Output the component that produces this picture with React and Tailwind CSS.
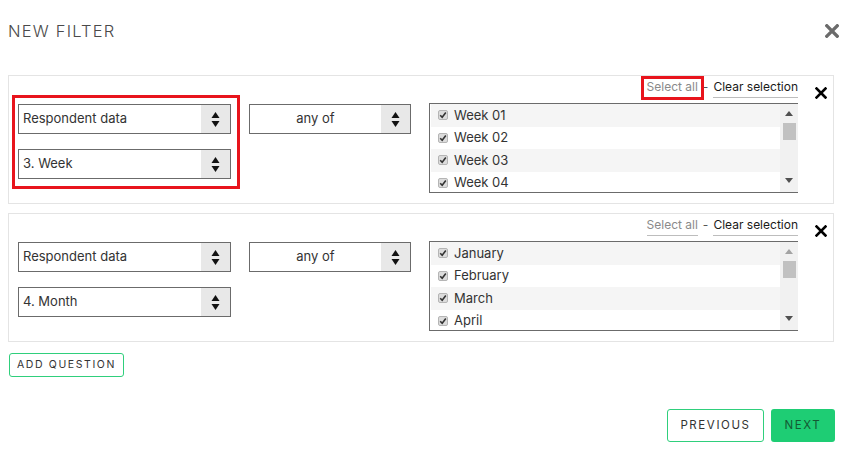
import React from 'react';

const font = { fontFamily: 'Inter, "Liberation Sans", sans-serif' };

const Arrows = () => (
    <svg width="9" height="17" viewBox="0 0 9 17" className="block">
        <path d="M4.5 1 L8.5 7 L0.5 7 Z" fill="#111" />
        <path d="M0.5 10 L8.5 10 L4.5 16 Z" fill="#111" />
    </svg>
);

const FakeSelect = ({ value, width, center }) => (
    <div className={`flex h-[30px] border border-[#6b6b6b] bg-white ${width}`}>
        <div className={`flex-1 flex items-center text-[13px] text-[#333] ${center ? 'justify-center' : 'pl-[4px]'}`}>{value}</div>
        <div className="w-[29px] bg-[#e8e8e8] flex items-center justify-center">
            <Arrows />
        </div>
    </div>
);

const CheckBox = () => (
    <span className="w-[10px] h-[10px] bg-[#dcdcdc] border border-[#b5b5b5] rounded-[2px] flex items-center justify-center">
        <svg width="8" height="8" viewBox="0 0 8 8">
            <path d="M1.2 4.2 L3.2 6.2 L6.8 1.6" stroke="#333" strokeWidth="1.6" fill="none" />
        </svg>
    </span>
);

const OptionList = ({ items, upDisabled }) => (
    <div className="flex w-[369px] h-[90px] border-l border-t border-b border-[#6b6b6b] bg-white overflow-hidden">
        <div className="flex-1 pl-[1px] overflow-hidden">
            {items.map((item, i) => (
                <div key={item} className={`h-[22.5px] shrink-0 flex items-center gap-[6px] pl-[7px] text-[13px] text-[#333] ${i % 2 === 0 ? 'bg-[#f5f5f5]' : 'bg-white'}`}>
                    <CheckBox />
                    <span>{item}</span>
                </div>
            ))}
        </div>
        <div className="w-[18px] bg-[#f1f1f1] flex flex-col items-center">
            <div className="h-[19px] flex items-center">
                <svg width="8" height="5" viewBox="0 0 8 5"><path d="M4 0 L8 5 L0 5 Z" fill={upDisabled ? '#a3a3a3' : '#505050'} /></svg>
            </div>
            <div className="w-[13px] h-[17px] bg-[#c1c1c1]" />
            <div className="flex-1" />
            <div className="h-[16px] flex items-start pt-[2px]">
                <svg width="8" height="5" viewBox="0 0 8 5"><path d="M0 0 L8 0 L4 5 Z" fill="#505050" /></svg>
            </div>
        </div>
    </div>
);

const CloseIcon = ({ size, color, stroke }) => (
    <svg width={size} height={size} viewBox="0 0 12 12">
        <path d="M1.5 1.5 L10.5 10.5 M10.5 1.5 L1.5 10.5" stroke={color} strokeWidth={stroke} strokeLinecap="square" />
    </svg>
);

const FilterPanel = ({ question, items, highlight }) => (
    <div className="flex border border-[#e4e4e4] w-[826px] h-[129px] pl-[9px] pt-[3px]">
        <div className="flex flex-col w-[780px] shrink-0">
            {/* select all / clear selection */}
            <div className="flex justify-end items-start h-[23px] text-[12px]">
                <span className="relative text-[#8a8a8a] border-b border-[#bdbdbd] pb-[2px] leading-[16px]">
                    Select all
                    {highlight && <span className="absolute -left-[6px] -right-[6px] -top-[3px] -bottom-[3px] border-[3px] border-[#e8141c]" />}
                </span>
                <span className="text-[#555] mx-[5px] leading-[16px]">-</span>
                <span className="text-[#1a1a1a] border-b border-[#bdbdbd] pb-[2px] leading-[16px]">Clear selection</span>
            </div>
            <div className="flex items-start">
                <div className="relative flex flex-col gap-[15px] mt-[2px]">
                    <FakeSelect value="Respondent data" width="w-[213px]" />
                    <FakeSelect value={question} width="w-[213px]" />
                    {highlight && <div className="absolute -left-[6px] -right-[9px] -top-[9px] -bottom-[10px] border-[3px] border-[#e8141c]" />}
                </div>
                <div className="ml-[18px] mt-[2px]">
                    <FakeSelect value="any of" width="w-[162px]" center />
                </div>
                <div className="ml-[18px] mt-[1px]">
                    <OptionList items={items} upDisabled={!highlight} />
                </div>
            </div>
        </div>
        <div className="pl-[17px] pt-[8px]">
            <CloseIcon size={12} color="#000" stroke={2.6} />
        </div>
    </div>
);

const App = () => {
    return (
        <div className="w-[853px] h-[468px] bg-white px-[8px]" style={font}>
            <div className="flex justify-between items-center h-[62px]">
                <h1 className="text-[16.5px] tracking-[1.2px] text-[#4a4a4a] font-light">NEW FILTER</h1>
                <div className="mr-[6px]">
                    <CloseIcon size={14} color="#6b6b6b" stroke={2.8} />
                </div>
            </div>

            <div className="mt-[13px] flex flex-col gap-[9px]">
                <FilterPanel question="3. Week" items={['Week 01', 'Week 02', 'Week 03', 'Week 04']} highlight />
                <FilterPanel question="4. Month" items={['January', 'February', 'March', 'April']} />
            </div>

            <button className="mt-[11px] ml-[1px] h-[24px] w-[115px] border border-[#2fcf7c] rounded-[3px] text-[10.5px] tracking-[1.6px] text-[#333] bg-white">
                ADD QUESTION
            </button>

            <div className="flex justify-end gap-[7px] mt-[32px] mr-[10px]">
                <button className="h-[33px] w-[97px] border border-[#2fcf7c] rounded-[3px] text-[11.5px] tracking-[1.6px] text-[#333] bg-white">
                    PREVIOUS
                </button>
                <button className="h-[33px] w-[64px] rounded-[3px] text-[11.5px] tracking-[1.6px] text-[#145a33] bg-[#1ecd74]">
                    NEXT
                </button>
            </div>
        </div>
    );
};

export default App;
